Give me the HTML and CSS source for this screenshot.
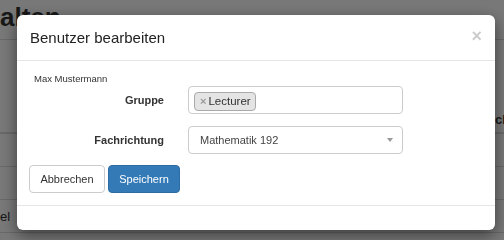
FILE: index.html
```html
<!DOCTYPE html>
<html lang="de">
<head>
<meta charset="utf-8">
<title>Benutzer bearbeiten</title>
<link rel="stylesheet" href="styles.css">
</head>
<body>
<div class="page">
  <h1 class="page-title">alten</h1>
  <div class="table">
    <div class="trow thead"><span></span><span class="th">ch</span></div>
    <div class="trow"><span></span><span></span></div>
    <div class="trow"><span></span><span></span></div>
    <div class="trow"><span class="td">el</span><span></span></div>
  </div>
</div>
<div class="backdrop"></div>
<div class="modal">
  <div class="modal-header">
    <h4 class="modal-title">Benutzer bearbeiten</h4>
    <span class="close">×</span>
  </div>
  <div class="modal-body">
    <div class="user-name">Max Mustermann</div>
    <div class="form-row">
      <label class="form-label">Gruppe</label>
      <div class="multi-select">
        <span class="tag"><span class="tag-x">×</span>Lecturer</span>
      </div>
    </div>
    <div class="form-row gap-after">
      <label class="form-label">Fachrichtung</label>
      <div class="single-select">
        <span class="select-value">Mathematik 192</span>
        <span class="select-arrow"></span>
      </div>
    </div>
    <div class="actions">
      <button class="btn btn-default">Abbrechen</button>
      <button class="btn btn-primary">Speichern</button>
    </div>
  </div>
  <div class="modal-footer"></div>
</div>
</body>
</html>
```
FILE: styles.css
```css
* { box-sizing: border-box; }
html, body { margin: 0; padding: 0; }
body {
  background: #fff;
  font-family: "Liberation Sans", Arial, sans-serif;
  color: #333;
  width: 504px;
  height: 240px;
  overflow: hidden;
}
.page { width: 504px; }
.page-title {
  margin: 0;
  font-size: 26px;
  font-weight: bold;
  line-height: 30px;
  padding-top: 2px;
  height: 40px;
  border-bottom: 1px solid #ddd;
  color: #333;
}
.table { padding-top: 66px; }
.trow {
  display: grid;
  grid-template-columns: 495px 1fr;
  height: 33px;
  border-bottom: 1px solid #ddd;
  align-items: center;
  font-size: 12px;
  white-space: nowrap;
}
.thead { height: 28px; border-bottom: 2px solid #ddd; }
.th { font-weight: bold; font-size: 13px; }
.td { font-size: 13px; }

.backdrop {
  position: fixed;
  inset: 0;
  background: rgba(0, 0, 0, 0.53);
}
.modal {
  position: fixed;
  left: 17px;
  top: 15px;
  width: 478px;
  height: 215px;
  background: #fff;
  border-radius: 6px;
  box-shadow: 0 5px 15px rgba(0, 0, 0, 0.5);
  display: flex;
  flex-direction: column;
}
.modal-header {
  height: 46px;
  border-bottom: 1px solid #e5e5e5;
  display: flex;
  align-items: center;
  justify-content: space-between;
  padding: 0 13px 0 13px;
}
.modal-title {
  margin: 0;
  font-size: 15px;
  font-weight: normal;
  color: #222;
}
.close {
  font-size: 18px;
  font-weight: bold;
  color: #000;
  opacity: 0.2;
  line-height: 1;
  margin-top: -3px;
}
.modal-body {
  height: 144px;
  padding: 12px 12px 0 12px;
}
.user-name {
  font-size: 9.5px;
  line-height: 12px;
  padding-left: 5px;
  color: #333;
}
.form-row {
  display: flex;
  align-items: center;
  margin-top: 1px;
  margin-bottom: 12px;
  height: 28px;
}
.form-row.gap-after { margin-bottom: 11px; }
.form-label {
  width: 135px;
  text-align: right;
  font-size: 11px;
  font-weight: bold;
  margin-right: 24px;
  color: #333;
}
.multi-select, .single-select {
  width: 215px;
  height: 28px;
  border: 1px solid #ccc;
  border-radius: 4px;
  background: #fff;
}
.multi-select { padding: 4px 0 0 5px; }
.tag {
  display: inline-flex;
  align-items: center;
  height: 19px;
  padding: 0 4px 0 5px;
  border: 1px solid #aaa;
  border-radius: 4px;
  background: #e4e4e4;
  font-size: 11.5px;
  color: #333;
}
.tag-x {
  color: #999;
  font-weight: bold;
  font-size: 11px;
  margin-right: 2px;
}
.single-select {
  display: flex;
  align-items: center;
  justify-content: space-between;
  padding: 0 9px 0 11px;
}
.select-value { font-size: 11px; color: #444; }
.select-arrow {
  width: 0;
  height: 0;
  border-style: solid;
  border-width: 4px 3px 0 3px;
  border-color: #999 transparent transparent transparent;
}
.actions {
  display: flex;
  gap: 3px;
}
.btn {
  height: 28px;
  padding: 0 10px;
  border-radius: 4px;
  font-family: "Liberation Sans", Arial, sans-serif;
  font-size: 11px;
  border: 1px solid #ccc;
  background: #fff;
  color: #333;
}
.btn-default { width: 76px; }
.btn-primary {
  width: 72px;
  background: #337ab7;
  border-color: #2e6da4;
  color: #fff;
}
.modal-footer {
  border-top: 1px solid #e5e5e5;
  height: 25px;
}
```
